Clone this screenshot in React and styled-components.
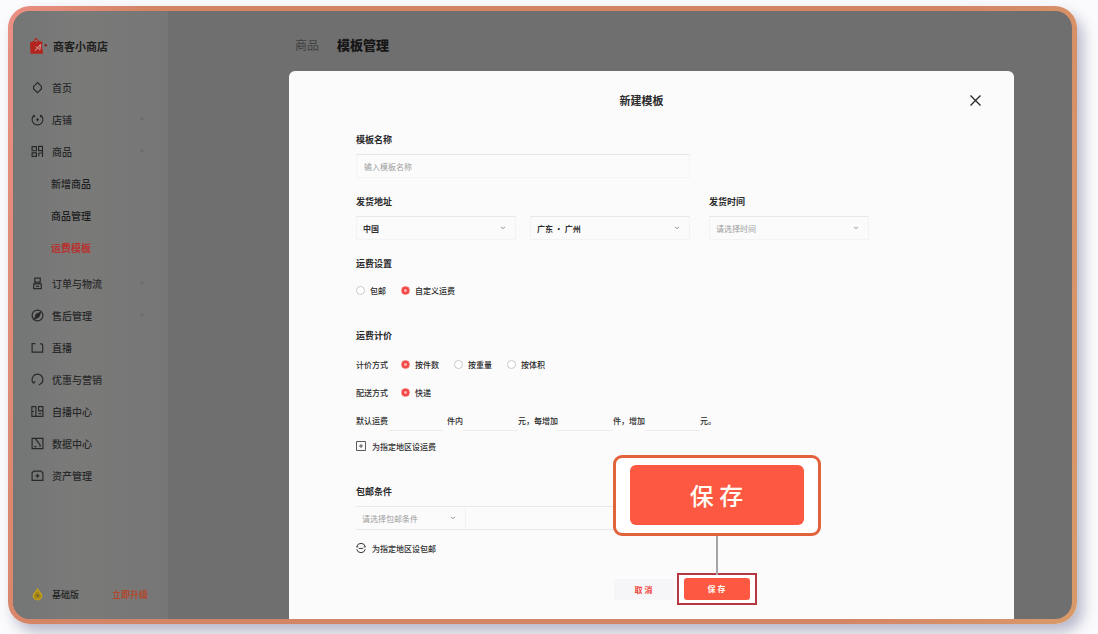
import React from 'react';
import styled, { createGlobalStyle } from 'styled-components';

const GlobalStyle = createGlobalStyle`
  * {
    box-sizing: border-box;
  }
  body {
    margin: 0;
    background: #fbfbfd;
    color: #2a2a2c;
    font-family: "Noto Sans CJK SC", "Liberation Sans", sans-serif;
    font-size: 8px;
  }
  button, input, select {
    font-family: inherit;
    font-size: inherit;
    color: inherit;
    margin: 0;
  }
`;

const Page = styled.div`
  display: flex;
  min-height: 100vh;
  padding: 6px 21px 10px 8px;
`;

const Frame = styled.div`
  flex: 1;
  display: flex;
  padding: 5px;
  border-radius: 22px;
  background: linear-gradient(100deg, #ea8f84 0%, #d48565 12%, #d48565 80%, #d99a69 100%);
  box-shadow: 6px 8px 14px rgba(80, 86, 125, 0.4);
`;

const Screen = styled.div`
  flex: 1;
  display: flex;
  border-radius: 17px;
  overflow: hidden;
  background: #6f6f6f;
`;

const Sidebar = styled.nav`
  flex: 0 0 155px;
  display: flex;
  flex-direction: column;
  background: linear-gradient(90deg, #737675, #7a7a79 40%, #767676);
`;

const Logo = styled.div`
  display: flex;
  align-items: center;
  gap: 5px;
  height: 60px;
  padding: 10px 0 0 16px;
  font-size: 11px;
  font-weight: 700;
  color: #1f1f20;
`;

const MenuItem = styled.a`
  display: flex;
  align-items: center;
  gap: 8px;
  height: 32px;
  padding: 0 24px 0 18px;
  font-size: 10px;
  font-weight: 500;
  color: #29292a;
  text-decoration: none;
`;

const MenuText = styled.span`
  flex: 1;
`;

const MenuArrow = styled.span`
  display: flex;
  color: #4f4f50;
`;

const SubMenu = styled.div`
  padding-bottom: 4px;
`;

const SubItem = styled.a`
  display: flex;
  align-items: center;
  height: 32px;
  padding-left: 38px;
  font-size: 10px;
  font-weight: ${(p) => (p.$active ? 700 : 500)};
  color: ${(p) => (p.$active ? '#b8322f' : '#1d1d1e')};
  text-decoration: none;
`;

const Plan = styled.div`
  display: flex;
  align-items: center;
  gap: 8px;
  height: 32px;
  margin: auto 0 9px;
  padding: 0 20px 0 18px;
  font-size: 9px;
  font-weight: 500;
  color: #232324;
`;

const Upgrade = styled.a`
  margin-left: auto;
  color: #b0482e;
  font-weight: 700;
  text-decoration: none;
`;

const Main = styled.main`
  flex: 1;
  display: flex;
  flex-direction: column;
  padding: 0 58px 0 121px;
`;

const Crumbs = styled.div`
  display: flex;
  align-items: center;
  gap: 18px;
  height: 60px;
  padding: 6px 0 0 6px;
`;

const CrumbLink = styled.a`
  font-size: 12px;
  color: #404041;
  text-decoration: none;
`;

const CrumbTitle = styled.h1`
  margin: 0;
  font-size: 13px;
  font-weight: 900;
  color: #161617;
`;

const Modal = styled.section`
  flex: 1;
  display: flex;
  flex-direction: column;
  border-radius: 6px 6px 0 0;
  background: #fbfbfb;
`;

const ModalHeader = styled.header`
  display: grid;
  grid-template-columns: 1fr auto 1fr;
  align-items: center;
  height: 58px;
  padding: 0 32px;
`;

const ModalTitle = styled.h2`
  grid-column: 2;
  margin: 0;
  padding-right: 20px;
  font-size: 11px;
  font-weight: 700;
`;

const Close = styled.button`
  justify-self: end;
  display: flex;
  padding: 0;
  border: 0;
  background: none;
  color: #2c2c2e;
`;

const Form = styled.form`
  flex: 1;
  display: flex;
  flex-direction: column;
  padding: 3px 0 14px 67px;
`;

const Section = styled.div`
  display: flex;
  flex-direction: column;
  gap: 6px;
  margin-bottom: ${(p) => (p.$wide ? 26 : 16)}px;
  &:nth-last-child(2) {
    margin-bottom: 12px;
  }
`;

const Columns = styled.div`
  display: flex;
  gap: 19px;
  ${Section} {
    margin-bottom: 16px;
  }
`;

const Label = styled.label`
  font-size: 9px;
  line-height: 16px;
  font-weight: 700;
  color: #2a2a2c;
`;

const TextInput = styled.input`
  width: 334px;
  height: 24px;
  padding: 0 7px;
  border: 1px solid #f5f5f6;
  border-top-color: #e6e6e7;
  background: none;
  outline: none;
  &::placeholder {
    color: #9b9b9e;
    opacity: 1;
  }
`;

const Selects = styled.div`
  display: flex;
  gap: 14px;
`;

const SelectBox = styled.div`
  display: grid;
  align-items: center;
  width: ${(p) => (p.$narrow ? 110 : 160)}px;
  height: 24px;
  border: 1px solid #f3f3f4;
  border-top-color: #e8e8e9;
  color: #9a9a9c;
  svg {
    grid-area: 1 / 1;
    justify-self: end;
    margin-right: 9px;
    pointer-events: none;
  }
`;

const Select = styled.select`
  grid-area: 1 / 1;
  width: 100%;
  height: 100%;
  padding: 0 6px;
  border: 0;
  background: none;
  appearance: none;
  outline: none;
  font-weight: ${(p) => (p.$empty ? 400 : 700)};
  color: ${(p) => (p.$empty ? '#9b9b9e' : '#2f2f31')};
`;

const Choices = styled.div`
  display: flex;
  align-items: center;
  gap: 15px;
  height: 24px;
`;

const Row = styled.div`
  display: flex;
  align-items: center;
  height: 28px;
  font-weight: 500;
`;

const RowName = styled.span`
  width: 45px;
`;

const RadioLabel = styled.label`
  display: flex;
  align-items: center;
  gap: 5px;
  font-weight: 500;
`;

const Radio = styled.input`
  appearance: none;
  width: 9px;
  height: 9px;
  border: 1px solid #c9c9cb;
  border-radius: 50%;
  background: #fff;
  &:checked {
    border-color: #f8706a;
    background: radial-gradient(circle, #fbb0aa 1px, #ef4444 2px);
  }
`;

const Rates = styled.div`
  display: flex;
  flex-direction: column;
`;

const RateInput = styled.input`
  width: 55px;
  height: 22px;
  padding: 0 6px;
  border: 0;
  border-bottom: 1px solid #ececed;
  background: none;
  outline: none;
`;

const RateGap = styled.span`
  width: 4px;
`;

const AddLink = styled.button`
  display: flex;
  align-items: center;
  gap: 6px;
  height: 24px;
  padding: 0;
  border: 0;
  background: none;
  font-weight: 500;
  color: #2f2f31;
`;

const Condition = styled.div`
  display: flex;
  width: 334px;
  border-top: 1px solid #e8e8e9;
  border-bottom: 1px solid #e8e8e9;
  ${SelectBox} {
    height: 22px;
    border-width: 0 1px 0 0;
  }
`;

const ConditionInput = styled.input`
  flex: 1;
  min-width: 0;
  border: 0;
  background: none;
  outline: none;
`;

const Actions = styled.div`
  display: flex;
  align-items: center;
  justify-content: center;
  gap: 3px;
  margin-top: auto;
`;

const Cancel = styled.button`
  width: 60px;
  height: 21px;
  padding: 0;
  border: 0;
  background: #f6f6f8;
  color: #f0443c;
  font-weight: 700;
`;

const Highlight = styled.div`
  position: relative;
  padding: 3px 5px;
  border: 2px solid #b73842;
  background: #fff;
`;

const Save = styled.button`
  display: block;
  width: ${(p) => (p.$large ? 174 : 66)}px;
  height: ${(p) => (p.$large ? 60 : 22)}px;
  padding: 0;
  border: 0;
  border-radius: ${(p) => (p.$large ? 6 : 3)}px;
  background: #fd5841;
  color: #fffdf6;
  font-size: ${(p) => (p.$large ? 24 : 8)}px;
  line-height: 1;
  font-weight: ${(p) => (p.$large ? 500 : 700)};
`;

const Callout = styled.div`
  position: absolute;
  bottom: 100%;
  left: 50%;
  transform: translateX(-50%);
  display: flex;
  flex-direction: column;
  align-items: center;
`;

const CalloutBox = styled.div`
  padding: 7px 14px 8px;
  border: 3px solid #e2623c;
  border-radius: 9px;
  background: #fff;
`;

const Connector = styled.div`
  width: 2px;
  height: 39px;
  background: #a5a5a9;
`;

const icons = {
  home: <path d="M6 1.4 9.6 5v2.4L6 10.8 2.4 7.4V5z" />,
  shop: <path d="M3.2 1.9a5 5 0 1 0 5.6 0M6 4.6v3M4.8 6.2h2.4M3.2 1.9v2M8.8 1.9v2" />,
  goods: <path d="M1 1.5h4v3.8H1zM1 7.2h4v3.3H1zM7 1.2h3.6v4H7zM7.2 7.4h3.4M10.6 5.2v5.9M7.2 7.4v3" />,
  order: <path d="M3.5 1h5v3.8h-5zM2.5 6.4h7v4.4h-7zM4.2 4.8v1.6M7.8 4.8v1.6M4.5 8.6h3" />,
  sale: (
    <>
      <circle cx="6" cy="6" r="5" />
      <path d="m8.7 3.2-1.5 4-3.8 2 1.4-4.2z" fill="currentColor" />
    </>
  ),
  live: <path d="M4 2.5H1v7.7h9.8V4.5c0-1.2-.9-2-2.2-2" />,
  service: <path d="M2.4 9.6a5 5 0 1 1 7.4-.3L7.2 11.2M2.4 9.6l1.4-2" />,
  book: <path d="M.8 1.5h3.7v9H.8zM7 1.5h4v4H7zM4.500 10.500H11v-5M7 8h2.500M.8 6h2" />,
  data: <path d="M3.8 1.200h7.200v9.600H1V1.200h2.800l4.600 6M8.400 7.200v2M3 8.800h2" />,
  asset: <path d="M2.500 2h6.800L11 3.700v6.800H1V3.500zM6 4.400v3.800M4.100 6.300h3.800" />,
};

const Icon = ({ name }) => (
  <svg width="13" height="13" viewBox="0 0 12 12" fill="none" stroke="currentColor" strokeWidth="1.1">
    {icons[name]}
  </svg>
);

const Arrow = ({ size = 6 }) => (
  <svg width={size} height="4" viewBox="0 0 6 4" fill="none" stroke="currentColor" strokeWidth="1">
    <path d="m1 1 2 1.600L5 1" />
  </svg>
);

const LogoMark = () => (
  <svg width="19" height="18" viewBox="0 0 19 18">
    <path d="M1 5.500 4.600 4 7 .6 10 4l3.800 1-1 3 1.400 8.800H1.500z" fill="#b3241f" />
    <path d="m5 4.600 2-2 2.400 2z" fill="#8d7773" />
    <path d="m6 13.800 5.400-6.300-.6 5.600M6.800 9.400l3 3" fill="none" stroke="#d9aaa4" strokeWidth="1" />
    <circle cx="16.700" cy="8.300" r="1.300" fill="#7d2825" />
  </svg>
);

const topMenu = [
  { icon: 'home', text: '首页' },
  { icon: 'shop', text: '店铺', arrow: true },
  { icon: 'goods', text: '商品', arrow: true },
];

const goodsMenu = ['新增商品', '商品管理', '运费模板'];

const restMenu = [
  { icon: 'order', text: '订单与物流', arrow: true },
  { icon: 'sale', text: '售后管理', arrow: true },
  { icon: 'live', text: '直播' },
  { icon: 'service', text: '优惠与营销' },
  { icon: 'book', text: '自播中心' },
  { icon: 'data', text: '数据中心' },
  { icon: 'asset', text: '资产管理' },
];

const Menu = ({ items }) =>
  items.map((item) => (
    <MenuItem href="#" key={item.text}>
      <Icon name={item.icon} />
      <MenuText>{item.text}</MenuText>
      {item.arrow && <MenuArrow><Arrow size={4} /></MenuArrow>}
    </MenuItem>
  ));

const Dropdown = ({ id, label, value, empty, narrow }) => (
  <SelectBox $narrow={narrow}>
    <Select id={id} aria-label={label} $empty={empty}>
      <option>{value}</option>
    </Select>
    <Arrow />
  </SelectBox>
);

const Option = ({ name, text, checked }) => (
  <RadioLabel>
    <Radio type="radio" name={name} defaultChecked={checked} />
    {text}
  </RadioLabel>
);

const App = () => {
  return <>
    <GlobalStyle />
    <Page>
      <Frame>
        <Screen>
          <Sidebar>
            <Logo><LogoMark />商客小商店</Logo>
            <Menu items={topMenu} />
            <SubMenu>
              {goodsMenu.map((text) => (
                <SubItem href="#" key={text} $active={text === '运费模板'}>{text}</SubItem>
              ))}
            </SubMenu>
            <Menu items={restMenu} />
            <Plan>
              <svg width="13" height="13" viewBox="0 0 12 12" fill="#a98a14" stroke="#c4a01c" strokeWidth="1.2">
                <path d="M6 1.200c.6 1.800 3.900 3.300 3.900 6A3.600 3.400 0 0 1 2.100 7.200c0-2.700 3.300-4.200 3.900-6z" />
                <circle cx="6" cy="7" r="1.200" fill="#6e6433" stroke="none" />
              </svg>
              基础版
              <Upgrade href="#">立即升级</Upgrade>
            </Plan>
          </Sidebar>
          <Main>
            <Crumbs>
              <CrumbLink href="#">商品</CrumbLink>
              <CrumbTitle>模板管理</CrumbTitle>
            </Crumbs>
            <Modal>
              <ModalHeader>
                <ModalTitle>新建模板</ModalTitle>
                <Close type="button" aria-label="关闭">
                  <svg width="13" height="13" viewBox="0 0 13 13" stroke="currentColor" strokeWidth="1.4">
                    <path d="m1.500 1.500 10 10M11.500 1.500l-10 10" />
                  </svg>
                </Close>
              </ModalHeader>
              <Form onSubmit={(e) => e.preventDefault()}>
                <Section>
                  <Label htmlFor="name">模板名称</Label>
                  <TextInput id="name" type="text" placeholder="输入模板名称" />
                </Section>
                <Columns>
                  <Section>
                    <Label htmlFor="country">发货地址</Label>
                    <Selects>
                      <Dropdown id="country" value="中国" />
                      <Dropdown label="省市" value="广东 · 广州" />
                    </Selects>
                  </Section>
                  <Section>
                    <Label htmlFor="time">发货时间</Label>
                    <Dropdown id="time" value="请选择时间" empty />
                  </Section>
                </Columns>
                <Section $wide role="radiogroup" aria-labelledby="fee-title">
                  <Label as="div" id="fee-title">运费设置</Label>
                  <Choices>
                    <Option name="fee" text="包邮" />
                    <Option name="fee" text="自定义运费" checked />
                  </Choices>
                </Section>
                <Section $wide role="group" aria-labelledby="rate-title">
                  <Label as="div" id="rate-title">运费计价</Label>
                  <Rates>
                    <Row>
                      <RowName>计价方式</RowName>
                      <Choices>
                        <Option name="unit" text="按件数" checked />
                        <Option name="unit" text="按重量" />
                        <Option name="unit" text="按体积" />
                      </Choices>
                    </Row>
                    <Row>
                      <RowName>配送方式</RowName>
                      <Option name="delivery" text="快递" checked />
                    </Row>
                    <Row>
                      默认运费
                      <RateInput aria-label="首件数量" />
                      <RateGap />
                      件内
                      <RateInput aria-label="首件运费" />
                      元，每增加
                      <RateInput aria-label="续件数量" />
                      件，增加
                      <RateInput aria-label="续件运费" />
                      元。
                    </Row>
                    <AddLink type="button">
                      <svg width="10" height="10" viewBox="0 0 10 10" fill="none" stroke="#5b5b5e">
                        <path d="M.5.5h9v9h-9zM5 3v4M3 5h4" />
                      </svg>
                      为指定地区设运费
                    </AddLink>
                  </Rates>
                </Section>
                <Section>
                  <Label htmlFor="free">包邮条件</Label>
                  <Condition>
                    <Dropdown id="free" value="请选择包邮条件" empty narrow />
                    <ConditionInput aria-label="包邮数值" />
                  </Condition>
                  <AddLink type="button">
                    <svg width="10" height="10" viewBox="0 0 10 10" fill="none" stroke="#3c3c3e">
                      <path d="M.7 3.800a4.400 4.400 0 0 1 8.600 0M.7 6.200a4.400 4.400 0 0 0 8.600 0M2.800 5.400h4.400M.3 3.900h2M7.700 3.900h2" />
                    </svg>
                    为指定地区设包邮
                  </AddLink>
                </Section>
                <Actions>
                  <Cancel type="button">取 消</Cancel>
                  <Highlight>
                    <Callout>
                      <CalloutBox>
                        <Save type="button" $large>保 存</Save>
                      </CalloutBox>
                      <Connector />
                    </Callout>
                    <Save type="submit">保 存</Save>
                  </Highlight>
                </Actions>
              </Form>
            </Modal>
          </Main>
        </Screen>
      </Frame>
    </Page>
  </>;
};

export default App;
